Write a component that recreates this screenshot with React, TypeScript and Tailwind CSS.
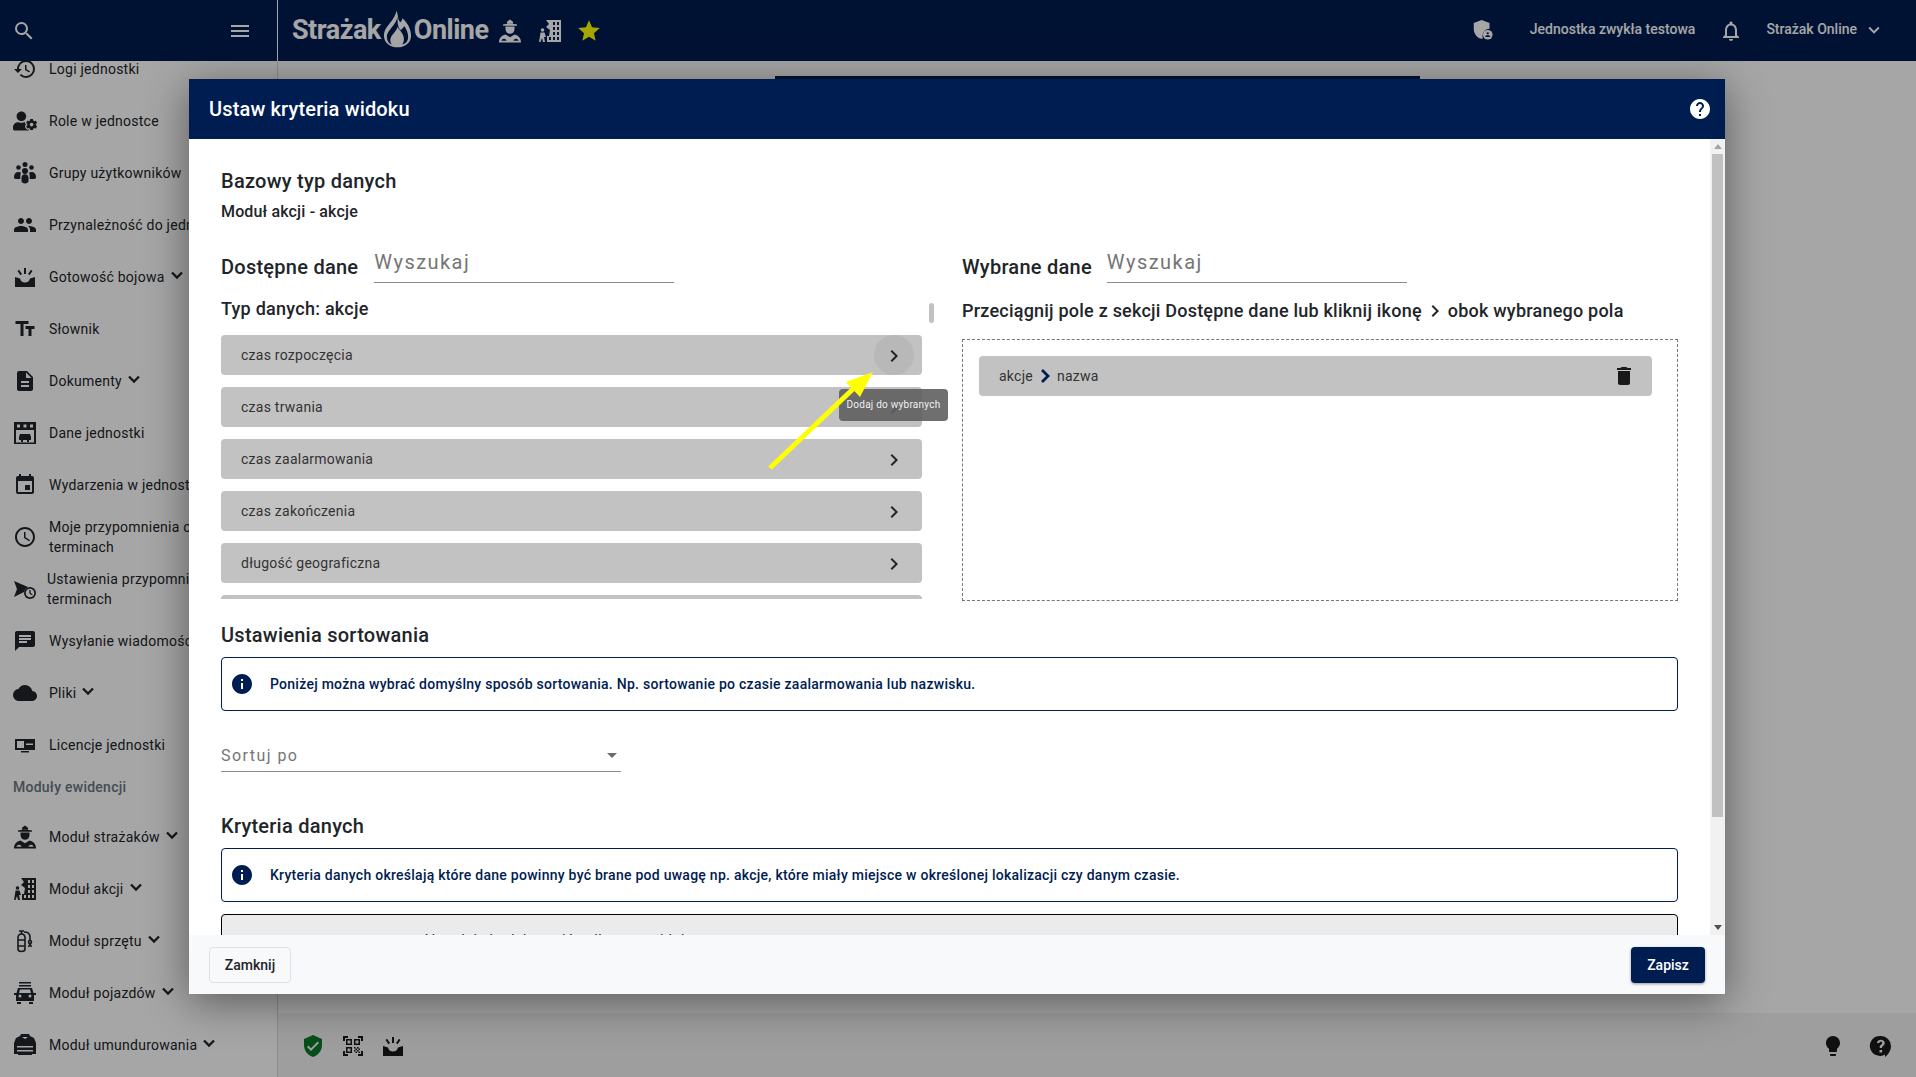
import type { ReactNode } from "react";
import {
  MdAccessTime,
  MdChat,
  MdCloud,
  MdDelete,
  MdDescription,
  MdEvent,
  MdExpandMore,
  MdHelp,
  MdHistory,
  MdInfo,
  MdKeyboardArrowRight,
  MdLightbulb,
  MdMenu,
  MdNotificationsNone,
  MdPeople,
  MdQrCodeScanner,
  MdSearch,
  MdStar,
  MdTextFields,
  MdVerifiedUser,
} from "react-icons/md";
import { FaUserCog } from "react-icons/fa";

type IconProps = { className?: string };

function BoldChevronDown({ className }: IconProps) {
  return (
    <svg viewBox="0 0 24 24" fill="none" stroke="currentColor" strokeWidth="2.800" className={className}>
      <path d="M6 9l6 6 6-6" />
    </svg>
  );
}

function BoldChevronRight({ className }: IconProps) {
  return (
    <svg viewBox="0 0 24 24" fill="none" stroke="currentColor" strokeWidth="2.800" className={className}>
      <path d="M9 6l6 6-6 6" />
    </svg>
  );
}

function Firefighter({ className }: IconProps) {
  return (
    <svg viewBox="0 0 24 24" fill="currentColor" className={className}>
      <path d="M12 0.500l3 2.200v2.100H9V2.700z" />
      <path d="M5 5.500c2.500-1 11.500-1 14 0v1.200H5z" />
      <path d="M7.500 7.500h9v2.500c0 2.800-2 4.800-4.500 4.800s-4.500-2-4.500-4.800z" />
      <path fillRule="evenodd" d="M1 23.500c0-4.500 2.500-7 6.500-8l4.500 2.800 4.500-2.800c4 1 6.500 3.500 6.500 8zM3.500 21.800h5c0-1-1-2-2.500-2s-2.500 1-2.500 2zm12 0h5c0-1-1-2-2.500-2s-2.500 1-2.500 2z" />
    </svg>
  );
}

function BuildingRescue({ className }: IconProps) {
  return (
    <svg viewBox="0 0 24 24" fill="currentColor" className={className}>
      <path d="M13 1h10v22H9v-6h2l1-6-4-3 3-3-3-4zM15 3v3h2V3zm4 0v3h2V3zm-4 5v3h2V8zm4 0v3h2V8zm-4 5v3h2v-3zm4 0v3h2v-3zm-8 5v3h2v-3zm4 0v3h2v-3zm4 0v3h2v-3z" fillRule="evenodd" />
      <circle cx="4.500" cy="11" r="1.800" />
      <path d="M2.500 13.500h4L8 18H6l1 5H5l-1-4-1.500 4H1l1-6z" />
    </svg>
  );
}

function Extinguisher({ className }: IconProps) {
  return (
    <svg viewBox="0 0 24 24" fill="none" stroke="currentColor" strokeWidth="1.600" className={className}>
      <path d="M6 2h5M8.500 2v3" />
      <path d="M5 9c0-2.500 1.500-4 3.500-4S12 6.500 12 9v11c0 1.500-1.500 2.500-3.500 2.500S5 21.500 5 20z" />
      <path d="M5 11h7M5 17h7" />
      <path d="M11 3c4 0 6 1.500 6 5v3" />
      <circle cx="17" cy="13" r="1.500" />
      <path d="M15.500 18l1.500-3 1.500 3" />
    </svg>
  );
}

function FireTruck({ className }: IconProps) {
  return (
    <svg viewBox="0 0 24 24" fill="currentColor" className={className}>
      <path d="M6 1h12v1.500H6zM6 4h12v1.500H6z" />
      <path d="M5 7h14l1.500 5H23v2h-2v6H3v-6H1v-2h2.500zM7 8.500L6 12h12l-1-3.500zM5.500 15a1.500 1.500 0 103 0 1.500 1.500 0 00-3 0zm10 0a1.500 1.500 0 103 0 1.500 1.500 0 00-3 0z" fillRule="evenodd" />
      <path d="M4 21h4v2H4zM16 21h4v2h-4z" />
    </svg>
  );
}

function Jacket({ className }: IconProps) {
  return (
    <svg viewBox="0 0 24 24" fill="currentColor" className={className}>
      <path d="M8 1h8l1 2 4 2 2 5v11h-4v1H5v-1H1V10l2-5 4-2zM9 4l3 2 3-2zM4 13v1.500h16V13zm0 4v1.500h16V17z" fillRule="evenodd" />
    </svg>
  );
}

function AlertTray({ className }: IconProps) {
  return (
    <svg viewBox="0 0 24 24" fill="currentColor" className={className}>
      <path d="M2 12l5 1.500c1 3 2.500 4 5 4s4-1 5-4l5-1.500v10H2z" />
      <path d="M11 3h2v6h-2zM4.500 6l1.500-1.300 3 4.300-1.500 1.300zM19.500 6L18 4.700 15 9l1.500 1.300z" />
    </svg>
  );
}

function StationGarage({ className }: IconProps) {
  return (
    <svg viewBox="0 0 24 24" fill="currentColor" className={className}>
      <path d="M1 1h22v22H1zM4 3.500v3h3v-3zm6.500 0v3h3v-3zm6.500 0v3h3v-3zM3 9v12.500h18V9z" fillRule="evenodd" />
      <path d="M7 13h10l1 3v3h-2v2h-2v-2h-4v2H8v-2H6v-3z" />
    </svg>
  );
}

function ReminderSettings({ className }: IconProps) {
  return (
    <svg viewBox="0 0 24 24" fill="currentColor" className={className}>
      <path d="M1 4l14 6a7 7 0 00-4 5l-10 5 3-8z" />
      <circle cx="17" cy="16" r="6" />
      <circle cx="17" cy="16" r="4.300" fill="#ffffff" />
      <path d="M16.300 13h1.300v3l2 1.200-.6 1-2.700-1.600z" />
    </svg>
  );
}

function LicenseScreen({ className }: IconProps) {
  return (
    <svg viewBox="0 0 24 24" fill="currentColor" className={className}>
      <path d="M2 6h20v11H2zM4 8v7h7V8zm9 2.500V12h7v-1.500z" fillRule="evenodd" />
      <path d="M8 18h8v1.500H8z" />
    </svg>
  );
}

function UserCluster({ className }: IconProps) {
  return (
    <svg viewBox="0 0 24 24" fill="currentColor" className={className}>
      <circle cx="12" cy="3.500" r="2.500" />
      <circle cx="5.500" cy="6.500" r="2.300" />
      <circle cx="18.500" cy="6.500" r="2.300" />
      <circle cx="12" cy="10" r="3" />
      <path d="M1 16c0-3 1.500-5 4.500-5 1 0 1.800.3 2.500.7-.5 1-.7 2.300-.7 3.800v2.500H2.500C1.500 18 1 17 1 16z" />
      <path d="M23 16c0-3-1.500-5-4.500-5-1 0-1.800.3-2.500.7.500 1 .7 2.300.7 3.800v2.500h4.800c1 0 1.500-1 1.500-2z" />
      <path d="M8.500 17c0-2.500 1.200-3.800 3.500-3.800s3.500 1.300 3.500 3.800v3c0 1.500-1.500 2.500-3.500 2.500S8.500 21.500 8.500 20z" />
    </svg>
  );
}

function ShieldPerson({ className }: IconProps) {
  return (
    <svg viewBox="0 0 24 24" fill="currentColor" className={className}>
      <path d="M11 1l9 3.500V11a8 8 0 00-8 8c0 1 .2 2 .5 3-.5.300-1 .5-1.500.7C6 21.500 2 17 2 11V4.500z" />
      <circle cx="18" cy="18" r="5.500" />
      <circle cx="18" cy="16.300" r="1.300" fill="#001d51" />
      <path d="M15 20.500c.5-1.300 1.700-1.800 3-1.800s2.500.5 3 1.800z" fill="#001d51" />
    </svg>
  );
}

function HelpBubble({ className }: IconProps) {
  return (
    <svg viewBox="0 0 24 24" fill="currentColor" className={className}>
      <path fillRule="evenodd" d="M12 2a10 10 0 0110 10c0 5-3.500 9-6 11v-2.500A10 10 0 1112 2zm-.1 3.800c-2.300 0-3.800 1.300-4 3.300h2.400c.1-.9.700-1.300 1.500-1.300.9 0 1.400.5 1.400 1.200 0 .7-.4 1.100-1.200 1.700-1 .8-1.300 1.500-1.300 2.900v.4h2.300v-.3c0-.8.200-1.100 1-1.700 1-.8 1.700-1.600 1.700-3 0-1.900-1.500-3.200-3.800-3.200zM10.500 16v2.400h2.600V16z" />
    </svg>
  );
}

function Flame({ className }: IconProps) {
  return (
    <svg viewBox="0 0 30 38" fill="currentColor" className={className}>
      <path d="M14 0c2 5 1 9 4 12 1-1 2-2 2-4 5 4 9 11 9 18 0 7-6 12-14 12S1 33 1 26c0-6 3-9 6-13 3-4 6-8 7-13zm1 6c-1 6-5 10-8 14-2 3-3 4-3 7 0 4 2 7 5 8-2-3-2-6 0-9 2-3 5-5 6-9 2 3 5 6 6 9 1 3 1 6-1 9 4-1 6-4 6-8 0-4-2-8-4-11-1 2-2 3-4 4-3-3-3-9-3-14z" />
      <path d="M15 22c2 3 4 5 4 8a4 4 0 01-8 0c0-3 2-5 4-8z" />
    </svg>
  );
}

type NavItem = {
  label: ReactNode;
  icon: ReactNode;
  chevron?: boolean;
  tight?: boolean;
};

const iconClass = "h-6 w-6 shrink-0";

const navItems: NavItem[] = [
  { label: "Logi jednostki", icon: <MdHistory className={iconClass} /> },
  { label: "Role w jednostce", icon: <FaUserCog className={iconClass} /> },
  { label: "Grupy użytkowników", icon: <UserCluster className={iconClass} /> },
  { label: "Przynależność do jednostki", icon: <MdPeople className={iconClass} /> },
  { label: "Gotowość bojowa", icon: <AlertTray className={iconClass} />, chevron: true },
  { label: "Słownik", icon: <MdTextFields className={iconClass} /> },
  { label: "Dokumenty", icon: <MdDescription className={iconClass} />, chevron: true },
  { label: "Dane jednostki", icon: <StationGarage className={iconClass} /> },
  { label: "Wydarzenia w jednostce", icon: <MdEvent className={iconClass} /> },
  { label: <>Moje przypomnienia o<br />terminach</>, icon: <MdAccessTime className={iconClass} /> },
  { label: <>Ustawienia przypomnień o<br />terminach</>, icon: <ReminderSettings className={iconClass} />, tight: true },
  { label: "Wysyłanie wiadomości", icon: <MdChat className={iconClass} /> },
  { label: "Pliki", icon: <MdCloud className={iconClass} />, chevron: true },
  { label: "Licencje jednostki", icon: <LicenseScreen className={iconClass} /> },
];

const moduleItems: NavItem[] = [
  { label: "Moduł strażaków", icon: <Firefighter className={iconClass} />, chevron: true },
  { label: "Moduł akcji", icon: <BuildingRescue className={iconClass} />, chevron: true },
  { label: "Moduł sprzętu", icon: <Extinguisher className={iconClass} />, chevron: true },
  { label: "Moduł pojazdów", icon: <FireTruck className={iconClass} />, chevron: true },
  { label: "Moduł umundurowania", icon: <Jacket className={iconClass} />, chevron: true },
];

const availableFields = [
  "czas rozpoczęcia",
  "czas trwania",
  "czas zaalarmowania",
  "czas zakończenia",
  "długość geograficzna",
  "szerokość geograficzna",
];

function NavRow({ item }: { item: NavItem }) {
  return (
    <div className="flex h-[52px] shrink-0 items-center pl-[13px] text-[14px] leading-[20px] tracking-[0.25px] text-[#212529]">
      {item.icon}
      <span className={`whitespace-nowrap ${item.tight ? "ml-[10px]" : "ml-3"}`}>{item.label}</span>
      {item.chevron && <BoldChevronDown className="ml-0.5 -mt-1 h-[20px] w-[20px]" />}
    </div>
  );
}

function Sidebar() {
  return (
    <aside className="w-[278px] shrink-0 overflow-hidden border-r border-[#d8d8d8] bg-white">
      <div className="-mt-[18px] flex flex-col">
        {navItems.map((item, i) => (
          <NavRow key={i} item={item} />
        ))}
        <div className="flex h-[40px] items-center pb-2 pl-[13px] text-[14px] font-medium tracking-[0.25px] text-[#6c757d]">
          Moduły ewidencji
        </div>
        {moduleItems.map((item, i) => (
          <NavRow key={i} item={item} />
        ))}
      </div>
    </aside>
  );
}

function TopBar() {
  return (
    <header className="flex h-[61px] shrink-0 items-center bg-[#001d51] text-white">
      <div className="flex h-full w-[278px] shrink-0 items-center justify-between border-r border-[#ffffff] pl-3 pr-[25px]">
        <MdSearch className="h-6 w-6" />
        <MdMenu className="h-6 w-6" />
      </div>
      <div className="ml-[14px] flex items-center">
        <span className="text-[27px] font-bold tracking-[-0.5px]">Strażak</span>
        <Flame className="mx-[2px] -mt-1 h-[38px] w-[29px]" />
        <span className="text-[27px] font-bold tracking-[-0.5px]">Online</span>
        <Firefighter className="ml-[9px] h-6 w-6" />
        <BuildingRescue className="ml-4 h-6 w-6" />
        <MdStar className="ml-[14px] h-[26px] w-[26px] text-[#ffff00]" />
      </div>
      <div className="-mt-0.5 ml-auto flex items-center pr-[31px] text-[14px] font-medium">
        <ShieldPerson className="h-[21px] w-[21px]" />
        <span className="ml-[37px]">Jednostka zwykła testowa</span>
        <MdNotificationsNone className="ml-6 mt-0.5 h-6 w-6" />
        <span className="ml-[23px]">Strażak Online</span>
        <MdExpandMore className="ml-1.5 h-[22px] w-[22px]" />
      </div>
    </header>
  );
}

function SearchBox({ className }: { className: string }) {
  return (
    <div className={`h-10 w-[300px] border-b border-[#8a8a8a] pt-[7px] text-[20px] leading-6 tracking-[1.45px] text-[#757575] ${className}`}>
      Wyszukaj
    </div>
  );
}

function InfoBox({ children }: { children: ReactNode }) {
  return (
    <div className="flex h-[54px] items-center rounded border border-[#001d51] pl-2 text-[14px] font-medium tracking-[0.26px] text-[#001d51]">
      <MdInfo className="h-6 w-6" />
      <span className="ml-4">{children}</span>
    </div>
  );
}

function FieldRow({ name }: { name: string }) {
  return (
    <div className="flex h-10 w-full shrink-0 items-center justify-between rounded bg-[#c2c2c2] pl-5 pr-2 text-[14px] text-[#333333]">
      <span className="tracking-[0.25px]">{name}</span>
      <MdKeyboardArrowRight className="mx-2 mt-px h-6 w-6 text-[#212529]" />
    </div>
  );
}

function CriteriaModal() {
  return (
    <div className="absolute left-[189px] top-[79px] flex h-[915px] w-[1536px] flex-col bg-white text-[#212529] shadow-[0_8px_40px_rgba(0,0,0,0.45)]">
      <div className="flex h-[60px] shrink-0 items-center justify-between bg-[#001d51] pl-5 pr-[13px] text-white">
        <h1 className="text-[20px] font-medium tracking-[0.15px]">Ustaw kryteria widoku</h1>
        <MdHelp className="h-6 w-6" />
      </div>

      <div className="flex min-h-0 flex-1">
        <div className="min-w-0 flex-1 overflow-hidden pl-8 pr-8 pt-[30px]">
          <h2 className="text-[20px] font-medium leading-6 tracking-[0.25px]">Bazowy typ danych</h2>
          <p className="mt-[9px] text-[16px] font-medium leading-5 tracking-[0.15px]">Moduł akcji - akcje</p>

          <div className="mt-[21px] flex">
            <div className="flex w-[741px] shrink-0">
              <div className="w-[701px] shrink-0">
                <div className="flex">
                  <span className="mt-3 text-[20px] font-medium leading-6 tracking-[0.25px]">Dostępne dane</span>
                  <SearchBox className="ml-4" />
                </div>
                <div className="mt-[14px] text-[18px] font-medium leading-6 tracking-[0.25px]">Typ danych: akcje</div>
                <div className="mt-[14px] flex h-[264px] flex-col gap-3 overflow-hidden">
                  {availableFields.map((name) => (
                    <FieldRow key={name} name={name} />
                  ))}
                </div>
              </div>
              <div className="ml-[7px] mt-[60px] h-5 w-[5px] rounded bg-[#c1c1c1]" />
            </div>

            <div className="min-w-0 flex-1">
              <div className="flex">
                <span className="mt-3 text-[20px] font-medium leading-6 tracking-[0.25px]">Wybrane dane</span>
                <SearchBox className="ml-[15px]" />
              </div>
              <div className="mt-4 flex items-center text-[18px] font-medium leading-6 tracking-[0.22px]">
                Przeciągnij pole z sekcji Dostępne dane lub kliknij ikonę
                <MdKeyboardArrowRight className="mx-px h-6 w-6" />
                obok wybranego pola
              </div>
              <div className="mt-4 h-[262px] border border-dashed border-[#777777] pl-4 pt-4">
                <div className="flex h-10 w-[673px] items-center justify-between rounded bg-[#c2c2c2] pl-5 pr-4 text-[14px] text-[#333333]">
                  <span className="flex items-center tracking-[0.25px]">
                    akcje
                    <BoldChevronRight className="h-6 w-6 text-[#001d51]" />
                    nazwa
                  </span>
                  <MdDelete className="h-6 w-6 text-[#1a1a1a]" />
                </div>
              </div>
            </div>
          </div>

          <h2 className="mt-[22px] text-[20px] font-medium leading-6 tracking-[0.25px]">Ustawienia sortowania</h2>
          <div className="mt-[10px]">
            <InfoBox>Poniżej można wybrać domyślny sposób sortowania. Np. sortowanie po czasie zaalarmowania lub nazwisku.</InfoBox>
          </div>
          <div className="mt-[21px] flex h-10 w-[400px] items-center justify-between border-b border-[#8a8a8a] pr-1 pt-2">
            <span className="text-[16px] tracking-[1.45px] text-[#757575]">Sortuj po</span>
            <div className="h-0 w-0 border-x-[5px] border-t-[5px] border-x-transparent border-t-[#6b6b6b]" />
          </div>
          <h2 className="mt-[42px] text-[20px] font-medium leading-6 tracking-[0.25px]">Kryteria danych</h2>
          <div className="mt-[10px]">
            <InfoBox>Kryteria danych określają które dane powinny być brane pod uwagę np. akcje, które miały miejsce w określonej lokalizacji czy danym czasie.</InfoBox>
          </div>
          <div className="mt-3 h-[60px] rounded border border-black bg-[#ebebeb] pl-[200px] pt-[15px] text-[14px] tracking-[0.6px]">
            Aktualnie brak kryteriów dla tego widoku
          </div>
        </div>

        <div className="flex w-[15px] shrink-0 flex-col items-center bg-[#f1f1f1]">
          <div className="mt-[5px] h-0 w-0 border-x-[4px] border-b-[5px] border-x-transparent border-b-[#a3a3a3]" />
          <div className="mt-[5px] h-[663px] w-[11px] bg-[#c1c1c1]" />
          <div className="mb-[5px] mt-auto h-0 w-0 border-x-[4px] border-t-[5px] border-x-transparent border-t-[#505050]" />
        </div>
      </div>

      <div className="flex h-[59px] shrink-0 items-center justify-between bg-[#f8f9fa] pl-5 pr-[20px] text-[14px] font-medium">
        <div className="flex h-9 w-[82px] items-center justify-center rounded border border-[#dee2e6] pt-px">Zamknij</div>
        <div className="flex h-9 w-[74px] items-center justify-center rounded bg-[#001d51] pt-px text-white shadow-[0_1px_3px_rgba(0,0,0,0.4)]">Zapisz</div>
      </div>
    </div>
  );
}

function HoverHints() {
  return (
    <>
      <div className="absolute left-[874px] top-[335px] h-10 w-10 rounded-full bg-black/5" />
      <div className="absolute left-[839px] top-[389px] flex h-8 w-[109px] items-center justify-center rounded bg-[#5f5f5f]/90 pb-px text-[10px] tracking-[0.25px] text-[#f0f0f0]">
        Dodaj do wybranych
      </div>
      <svg viewBox="0 0 120 110" className="absolute left-[760px] top-[365px] h-[110px] w-[120px]">
        <path d="M10 103L93 24" stroke="#ffff00" strokeWidth="5" />
        <path d="M113 7L86 17L100 32Z" fill="#ffff00" />
      </svg>
    </>
  );
}

export default function App() {
  return (
    <div className="relative flex h-screen w-full flex-col overflow-hidden bg-white font-['Roboto',sans-serif]">
      <TopBar />
      <div className="flex min-h-0 flex-1">
        <Sidebar />
        <main className="flex min-w-0 flex-1 flex-col">
          <div className="ml-[497px] mt-[15px] h-[3px] w-[645px] bg-[#001d51]" />
          <div className="mt-auto flex h-[64px] items-center justify-between bg-[#f3f3f3] pl-[23px] pr-[23px] pt-0.5">
            <div className="flex items-center gap-4">
              <MdVerifiedUser className="h-6 w-6 text-[#0a7a2a]" />
              <MdQrCodeScanner className="h-6 w-6 text-[#1a1a1a]" />
              <AlertTray className="h-6 w-6 text-[#1a1a1a]" />
            </div>
            <div className="flex items-center gap-6 text-[#1a1a1a]">
              <MdLightbulb className="h-6 w-6" />
              <HelpBubble className="h-6 w-6" />
            </div>
          </div>
        </main>
      </div>
      <div className="absolute inset-0 bg-black/35" />
      <CriteriaModal />
      <HoverHints />
    </div>
  );
}
